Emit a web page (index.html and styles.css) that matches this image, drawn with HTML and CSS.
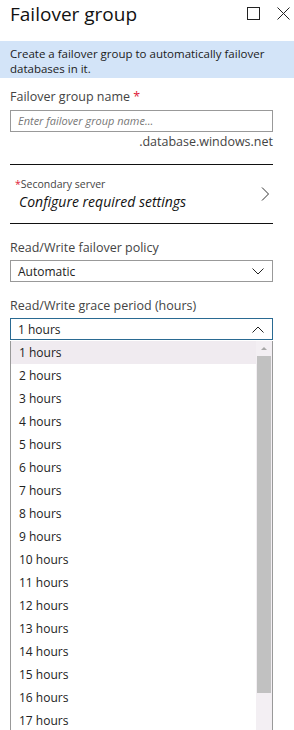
FILE: index.html
```html
<!DOCTYPE html>
<html lang="en">

<head>
  <meta charset="UTF-8">
  <title>Failover group</title>
  <link rel="stylesheet" href="styles.css">
</head>

<body>

  <div class="header">
    <h1>Failover group</h1>
    <div class="actions">
      <svg width="13" height="13" viewBox="0 0 13 13"><rect x="0.5" y="0.5" width="12" height="12" fill="none" stroke="#222" /></svg>
      <svg width="13" height="13" viewBox="0 0 13 13"><path d="M0.5 0.5 L12.5 12.5 M12.5 0.5 L0.5 12.5" stroke="#222" fill="none" /></svg>
    </div>
  </div>

  <div class="info">
    Create a failover group to automatically failover databases in it.
  </div>

  <div class="form">
    <label class="field-label">Failover group name <span class="req">*</span></label>
    <div class="textbox">Enter failover group name...</div>
    <div class="suffix">.database.windows.net</div>

    <div class="picker">
      <div>
        <div class="picker-label"><span class="req">*</span>Secondary server</div>
        <div class="picker-value">Configure required settings</div>
      </div>
      <svg width="9" height="14" viewBox="0 0 9 14"><path d="M1 0.5 L7.5 7 L1 13.5" stroke="#333" fill="none" /></svg>
    </div>

    <label class="field-label policy">Read/Write failover policy</label>
    <div class="select">
      <span>Automatic</span>
      <svg width="12" height="7" viewBox="0 0 12 7"><path d="M0.5 0.5 L6 6 L11.5 0.5" stroke="#222" fill="none" /></svg>
    </div>

    <label class="field-label grace">Read/Write grace period (hours)</label>
    <div class="select open">
      <span>1 hours</span>
      <svg width="12" height="7" viewBox="0 0 12 7"><path d="M0.5 6.5 L6 1 L11.5 6.5" stroke="#222" fill="none" /></svg>
    </div>

    <div class="list">
      <div class="options" id="options"></div>
      <div class="scroll">
        <div class="arrow"></div>
        <div class="thumb"></div>
      </div>
    </div>
  </div>

  <script>
    const options = document.getElementById('options');
    for (let i = 1; i <= 17; i++) {
      const row = document.createElement('div');
      row.className = i === 1 ? 'option selected' : 'option';
      row.textContent = `${i} hours`;
      options.appendChild(row);
    }
  </script>

</body>

</html>
```

FILE: styles.css
```css
body {
  margin: 0;
  height: 730px;
  overflow: hidden;
  background: white;
  font-family: "Open Sans", "Noto Sans", sans-serif;
  color: #222;
}

.header {
  display: flex;
  justify-content: space-between;
  align-items: center;
  height: 41px;
  padding: 0 4px 0 10px;
}

.header h1 {
  margin: 0 0 14px;
  font-size: 19px;
  font-weight: 400;
  color: #111;
}

.actions {
  display: flex;
  gap: 17px;
  margin-bottom: 14px;
}

.info {
  background: #d3e4f8;
  height: 37px;
  box-sizing: border-box;
  padding: 5px 10px 0;
  font-size: 11.5px;
  line-height: 15px;
  color: #1b1b1b;
}

.form {
  padding: 0 21px 0 10px;
}

.req {
  color: #e0203a;
}

.field-label {
  display: block;
  margin-top: 10px;
  font-size: 12.5px;
  line-height: 18px;
  color: #444;
}

.textbox {
  margin-top: 4px;
  height: 20px;
  border: 1px solid #999;
  padding: 0 7px;
  font-size: 11px;
  line-height: 20px;
  font-style: italic;
  color: #777;
}

.suffix {
  text-align: right;
  font-size: 12.5px;
  line-height: 18px;
  color: #444;
  margin-top: 1px;
}

.picker {
  display: flex;
  justify-content: space-between;
  align-items: center;
  margin-top: 13px;
  border-top: 1px solid #111;
  border-bottom: 1px solid #111;
  height: 58px;
  padding: 0 3px 0 5px;
}

.picker-label {
  font-size: 10.5px;
  line-height: 14px;
  color: #444;
}

.picker-value {
  margin-top: 1px;
  padding-left: 4px;
  font-size: 14px;
  line-height: 19px;
  font-style: italic;
  color: #111;
}

.field-label.policy {
  margin-top: 15px;
}

.field-label.grace {
  margin-top: 15px;
}

.select {
  display: flex;
  justify-content: space-between;
  align-items: center;
  margin-top: 3px;
  height: 20px;
  border: 1px solid #999;
  padding: 0 8px 0 7px;
  font-size: 12px;
  color: #222;
}

.select.open {
  border-color: #2a6a92;
}

.list {
  display: flex;
  height: 400px;
  margin-top: 1px;
  border-left: 1px solid #999;
  border-right: 1px solid #999;
}

.options {
  flex: 1;
}

.option {
  height: 23px;
  line-height: 23px;
  padding-left: 8px;
  font-size: 12px;
  color: #222;
}

.option.selected {
  background: #f0ebf0;
}

.scroll {
  width: 16px;
  background: #f3eff3;
}

.arrow {
  height: 15px;
  display: flex;
  justify-content: center;
  align-items: center;
}

.arrow::before {
  content: "";
  border-left: 3px solid transparent;
  border-right: 3px solid transparent;
  border-bottom: 3px solid #a8a8a8;
}

.thumb {
  margin: 0 1px;
  height: 337px;
  background: #c1c1c1;
}
```
